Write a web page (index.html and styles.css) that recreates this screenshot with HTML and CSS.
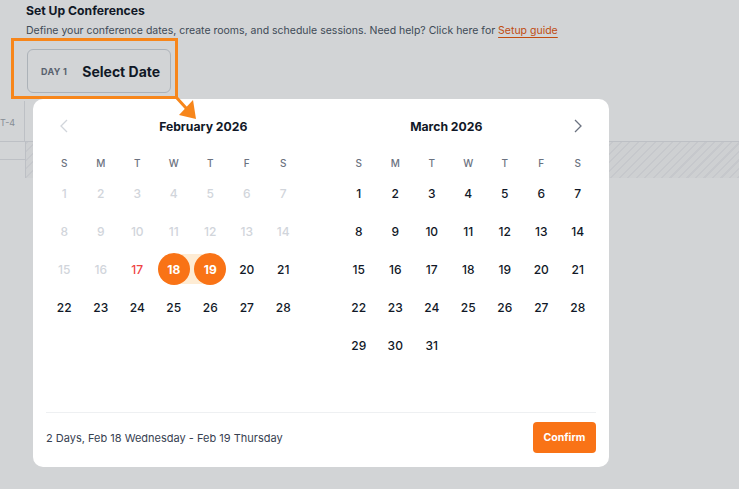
FILE: index.html
```html
<!DOCTYPE html>
<html lang="en">
<head>
<meta charset="utf-8">
<title>Set Up Conferences</title>
<link rel="stylesheet" href="styles.css">
</head>
<body>
<main class="page">
  <section class="intro">
    <h1 class="title">Set Up Conferences</h1>
    <p class="subtitle">Define your conference dates, create rooms, and schedule sessions. Need help? Click here for <a class="guide" href="#">Setup guide</a></p>
    <div class="day-tabs">
      <button class="day-btn"><span class="day-label">DAY 1</span><span class="day-value">Select Date</span></button>
    </div>
  </section>
  <section class="schedule">
    <div class="sched-row head-row">
      <div class="tz">T-4</div>
      <div class="sched-cell"></div>
    </div>
    <div class="sched-row">
      <div class="tz"></div>
      <div class="sched-cell hatched"></div>
    </div>
  </section>
</main>

<div class="overlay"></div>

<div class="callout"></div>
<svg class="callout-arrow" width="40" height="40" viewBox="0 0 40 40">
  <path d="M6 7 L16 18" stroke="#f7861b" stroke-width="3" fill="none" stroke-linecap="round"/>
  <path d="M9 25 L23 10 L26 29 Z" fill="#f7861b"/>
</svg>

<div class="picker">
  <div class="months">
    <div class="month">
      <div class="month-head">
        <span class="nav nav-disabled"><svg width="8" height="14" viewBox="0 0 8 14"><path d="M7 1 L1 7 L7 13" stroke="currentColor" stroke-width="1.3" fill="none"/></svg></span>
        <span class="month-name feb-name">February 2026</span>
      </div>
      <div class="grid">
        <span class="wd">S</span><span class="wd">M</span><span class="wd">T</span><span class="wd">W</span><span class="wd">T</span><span class="wd">F</span><span class="wd">S</span>
        <span class="d off">1</span><span class="d off">2</span><span class="d off">3</span><span class="d off">4</span><span class="d off">5</span><span class="d off">6</span><span class="d off">7</span>
        <span class="d off">8</span><span class="d off">9</span><span class="d off">10</span><span class="d off">11</span><span class="d off">12</span><span class="d off">13</span><span class="d off">14</span>
        <span class="d off">15</span><span class="d off">16</span><span class="d today">17</span><span class="d sel start"><i>18</i></span><span class="d sel end"><i>19</i></span><span class="d">20</span><span class="d">21</span>
        <span class="d">22</span><span class="d">23</span><span class="d">24</span><span class="d">25</span><span class="d">26</span><span class="d">27</span><span class="d">28</span>
      </div>
    </div>
    <div class="month">
      <div class="month-head">
        <span class="month-name mar-name">March 2026</span>
        <span class="nav nav-active"><svg width="8" height="14" viewBox="0 0 8 14"><path d="M1 1 L7 7 L1 13" stroke="currentColor" stroke-width="1.3" fill="none"/></svg></span>
      </div>
      <div class="grid">
        <span class="wd">S</span><span class="wd">M</span><span class="wd">T</span><span class="wd">W</span><span class="wd">T</span><span class="wd">F</span><span class="wd">S</span>
        <span class="d">1</span><span class="d">2</span><span class="d">3</span><span class="d">4</span><span class="d">5</span><span class="d">6</span><span class="d">7</span>
        <span class="d">8</span><span class="d">9</span><span class="d">10</span><span class="d">11</span><span class="d">12</span><span class="d">13</span><span class="d">14</span>
        <span class="d">15</span><span class="d">16</span><span class="d">17</span><span class="d">18</span><span class="d">19</span><span class="d">20</span><span class="d">21</span>
        <span class="d">22</span><span class="d">23</span><span class="d">24</span><span class="d">25</span><span class="d">26</span><span class="d">27</span><span class="d">28</span>
        <span class="d">29</span><span class="d">30</span><span class="d">31</span>
      </div>
    </div>
  </div>
  <div class="footer">
    <span class="summary">2 Days, Feb 18 Wednesday - Feb 19 Thursday</span>
    <button class="confirm">Confirm</button>
  </div>
</div>
</body>
</html>
```

FILE: styles.css
```css
* { box-sizing: border-box; }
html, body { margin: 0; padding: 0; }
body {
  width: 739px;
  height: 489px;
  overflow: hidden;
  background: #ffffff;
  font-family: Inter, "Noto Sans", "Liberation Sans", sans-serif;
  color: #111827;
  position: relative;
}
.page { display: flex; flex-direction: column; }
.intro { padding: 3px 0 0 26px; }
.title {
  margin: 0;
  font-size: 12.2px;
  line-height: 16px;
  font-weight: 700;
  color: #111827;
}
.subtitle {
  margin: 4px 0 0;
  font-size: 10.5px;
  line-height: 16px;
  color: #4b5563;
}
.guide {
  color: #ea580c;
  text-decoration: underline;
  text-underline-offset: 3px;
  text-decoration-thickness: 1px;
}
.day-tabs { display: flex; margin-top: 10px; padding-left: 1px; }
.day-btn {
  display: flex;
  align-items: center;
  gap: 15px;
  width: 144px;
  height: 44px;
  padding: 0 0 0 13px;
  border: 1px solid #d1d5db;
  border-radius: 6px;
  background: #ffffff;
  font-family: inherit;
}
.day-label { font-size: 9px; font-weight: 700; color: #6b7280; letter-spacing: 0.3px; }
.day-value { font-size: 14px; font-weight: 700; color: #111827; }

.schedule { margin-top: 8px; }
.sched-row { display: flex; }
.head-row { height: 41px; border-bottom: 1px solid #e6e7ea; }
.head-row .tz { border-right: 1px solid #e6e7ea; }
.tz {
  width: 25px;
  font-size: 9px;
  color: #a3a8b0;
  padding-top: 16px;
}
.sched-cell { flex: 1; }
.hatched {
  height: 36px;
  border-left: 1px solid #e6e7ea;
  background: repeating-linear-gradient(-45deg, #f1f1f3 0 1.5px, #fafafb 1.5px 6px);
}
.sched-row:nth-child(2) .tz { height: 18px; border-bottom: 1px solid #e6e7ea; }

.overlay {
  position: absolute;
  inset: 0;
  background: rgba(17, 24, 39, 0.19);
}

.callout {
  position: absolute;
  left: 11px;
  top: 38px;
  width: 167px;
  height: 61px;
  border: 3px solid #f7861b;
}
.callout-arrow {
  position: absolute;
  left: 170px;
  top: 90px;
  z-index: 3;
}

.picker {
  position: absolute;
  left: 33px;
  top: 99px;
  width: 576px;
  height: 368px;
  background: #ffffff;
  border-radius: 10px;
  padding: 16px 13px 14px;
  display: flex;
  flex-direction: column;
  z-index: 2;
}
.months { display: flex; gap: 39px; }
.month { width: 256px; }
.month-head {
  height: 22px;
  display: flex;
  align-items: center;
}
.nav { width: 36px; flex: none; display: flex; justify-content: center; }
.nav-disabled { color: #d1d5db; }
.nav-active { color: #6b7280; }
.month-name {
  flex: 1;
  text-align: center;
  font-size: 12.2px;
  font-weight: 700;
  color: #111827;
}
.feb-name { padding-left: 23px; }
.mar-name { padding-right: 8px; }
.grid {
  margin-top: 16px;
  display: grid;
  grid-template-columns: repeat(7, 1fr);
  grid-template-rows: 20px;
  grid-auto-rows: 36px;
  row-gap: 2px;
}
.wd {
  display: flex; align-items: center; justify-content: center;
  font-size: 10px; font-weight: 500; color: #6b7280;
}
.d {
  display: flex; align-items: center; justify-content: center;
  font-size: 12px; font-weight: 500; color: #111827;
  position: relative;
}
.d.off { color: #d1d5db; }
.d.today { color: #ef4444; }
.d.sel i {
  font-style: normal;
  position: relative;
  z-index: 1;
  width: 32px; height: 32px;
  border-radius: 50%;
  background: #f97316;
  color: #ffffff;
  font-weight: 700;
  display: flex; align-items: center; justify-content: center;
}
.d.start::before, .d.end::before {
  content: "";
  position: absolute;
  top: 3px; bottom: 3px;
  background: #feecd4;
}
.d.start::before { left: 50%; right: 0; }
.d.end::before { left: 0; right: 50%; }

.footer {
  margin-top: auto;
  border-top: 1px solid #eef0f2;
  padding-top: 9px;
  display: flex;
  align-items: center;
  justify-content: space-between;
}
.summary { font-size: 11px; color: #374151; }
.confirm {
  height: 31px;
  width: 63px;
  border: none;
  border-radius: 4px;
  background: #f97316;
  color: #ffffff;
  font-family: inherit;
  font-size: 10.5px;
  font-weight: 700;
}
```
